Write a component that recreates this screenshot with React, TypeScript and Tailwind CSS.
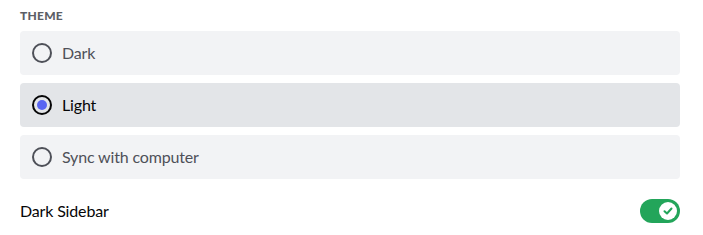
import { useState } from 'react'

const options = ['Dark', 'Light', 'Sync with computer']

function Radio({ checked }: { checked: boolean }) {
  return (
    <svg width="24" height="24" viewBox="0 0 24 24" className="shrink-0">
      <circle
        cx="12"
        cy="12"
        r="9"
        fill="none"
        stroke={checked ? '#060607' : '#4e5058'}
        strokeWidth="2"
      />
      {checked && <circle cx="12" cy="12" r="5" fill="#5865f2" />}
    </svg>
  )
}

export default function App() {
  const [theme, setTheme] = useState('Light')
  const [darkSidebar, setDarkSidebar] = useState(true)

  return (
    <main
      className="bg-white w-[703px] h-[235px] pl-5 pr-[23px] pt-2"
      style={{ fontFamily: 'Lato, "Noto Sans", sans-serif' }}
    >
      {/* THEME */}
      <h2 className="text-[12px] leading-4 font-black text-[#5c5e66] tracking-[0.02em] mb-[7px]">
        THEME
      </h2>

      <div className="flex flex-col gap-2">
        {options.map((opt) => {
          const checked = theme === opt
          return (
            <button
              key={opt}
              onClick={() => setTheme(opt)}
              className={
                'h-11 w-full rounded flex items-center gap-2 pl-[10px] text-left text-[16px] tracking-[-0.01em] ' +
                (checked
                  ? 'bg-[#e3e5e8] text-[#060607]'
                  : 'bg-[#f2f3f5] text-[#4e5058]')
              }
            >
              <Radio checked={checked} />
              <span>{opt}</span>
            </button>
          )
        })}
      </div>

      {/* DARK SIDEBAR */}
      <div className="mt-5 flex items-center justify-between">
        <span className="text-[16px] tracking-[-0.01em] text-[#060607]">Dark Sidebar</span>
        <button
          onClick={() => setDarkSidebar(!darkSidebar)}
          className={
            'w-10 h-6 rounded-full flex items-center px-[3px] ' +
            (darkSidebar ? 'bg-[#23a55a] justify-end' : 'bg-[#80848e] justify-start')
          }
        >
          <span className="w-[18px] h-[18px] rounded-full bg-white flex items-center justify-center">
            {darkSidebar && (
              <svg width="12" height="12" viewBox="0 0 12 12">
                <path
                  d="M2.5 6.2 L5 8.5 L9.5 3.5"
                  fill="none"
                  stroke="#23a55a"
                  strokeWidth="2"
                  strokeLinecap="round"
                  strokeLinejoin="round"
                />
              </svg>
            )}
          </span>
        </button>
      </div>
    </main>
  )
}
